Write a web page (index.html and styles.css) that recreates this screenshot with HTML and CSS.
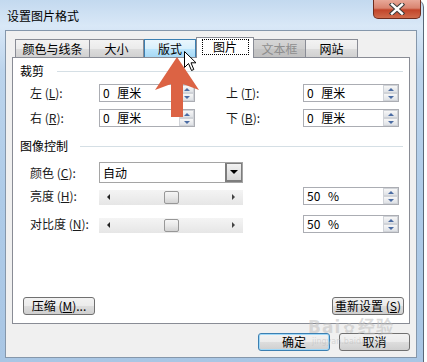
FILE: index.html
```html
<!DOCTYPE html>
<html lang="zh-CN">

<head>
    <meta charset="UTF-8">
    <title>设置图片格式</title>
    <link rel="stylesheet" href="styles.css">
</head>

<body>
    <div class="window">
        <div class="titlebar">
            <span class="title">设置图片格式</span>
            <div class="close-btn">
                <svg width="18" height="12" viewBox="0 0 18 12">
                    <path d="M4 1.5 L14 10.5 M14 1.5 L4 10.5" stroke="#3b3b3b" stroke-width="4.4" stroke-linecap="square" />
                    <path d="M4 1.5 L14 10.5 M14 1.5 L4 10.5" stroke="#fff" stroke-width="2.4" stroke-linecap="square" />
                </svg>
            </div>
        </div>

        <div class="client">
            <div class="tabs">
                <div class="tab" style="width:75px">颜色与线条</div>
                <div class="tab" style="width:54px">大小</div>
                <div class="tab hover" style="width:52px">版式</div>
                <div class="tab active" style="width:58px"><span class="focus">图片</span></div>
                <div class="tab disabled" style="width:52px">文本框</div>
                <div class="tab" style="width:52px">网站</div>
            </div>

            <div class="panel">
                <div class="group-head"><span>裁剪</span><i class="rule"></i></div>

                <div class="crop-grid">
                    <label>左 (<u>L</u>):</label>
                    <div class="spin-box"><span>0 厘米</span><div class="spin"><b class="up"></b><b class="down"></b></div></div>
                    <label>上 (<u>T</u>):</label>
                    <div class="spin-box"><span>0 厘米</span><div class="spin"><b class="up"></b><b class="down"></b></div></div>
                    <label>右 (<u>R</u>):</label>
                    <div class="spin-box"><span>0 厘米</span><div class="spin"><b class="up"></b><b class="down"></b></div></div>
                    <label>下 (<u>B</u>):</label>
                    <div class="spin-box"><span>0 厘米</span><div class="spin"><b class="up"></b><b class="down"></b></div></div>
                </div>

                <div class="group-head image-head"><span>图像控制</span><i class="rule"></i></div>

                <div class="ctl-row row-color">
                    <label>颜色 (<u>C</u>):</label>
                    <div class="combo"><span>自动</span><b class="drop"><i></i></b></div>
                </div>
                <div class="ctl-row row-bright">
                    <label>亮度 (<u>H</u>):</label>
                    <div class="slider"><i class="arr-l"></i><span class="thumb"></span><i class="arr-r"></i></div>
                    <div class="spin-box"><span>50 %</span><div class="spin"><b class="up"></b><b class="down"></b></div></div>
                </div>
                <div class="ctl-row row-contrast">
                    <label>对比度 (<u>N</u>):</label>
                    <div class="slider"><i class="arr-l"></i><span class="thumb"></span><i class="arr-r"></i></div>
                    <div class="spin-box"><span>50 %</span><div class="spin"><b class="up"></b><b class="down"></b></div></div>
                </div>

                <div class="panel-buttons">
                    <button class="btn">压缩 (<u>M</u>)...</button>
                    <button class="btn">重新设置 (<u>S</u>)</button>
                </div>
            </div>

            <div class="footer">
                <button class="btn default">确定</button>
                <button class="btn">取消</button>
            </div>
        </div>

        <!-- watermark over the dialog -->
        <div class="watermark">
            <span class="wm-big">Bai<span class="paw">&#10047;</span>经验</span>
            <span class="wm-small">jingyan.baidu.com</span>
        </div>

        <!-- red arrow pointing at the tab -->
        <svg class="pointer-arrow" width="50" height="62" viewBox="0 0 50 62">
            <polygon points="26,0 48,33 32,27 32,60 20,60 20,27 4,33" fill="#dc6344" />
        </svg>

        <!-- mouse cursor -->
        <svg class="cursor" width="13" height="21" viewBox="0 0 13 21">
            <path d="M0.5 0.5 L0.5 16.5 L4.5 12.5 L7.5 19.5 L9.8 18.5 L7 11.8 L12 11.8 Z" fill="#fff" stroke="#000" stroke-width="1" />
        </svg>
    </div>
</body>

</html>
```

FILE: styles.css
```css
body {
  margin: 0;
  width: 427px;
  height: 362px;
  overflow: hidden;
  background: #ffffff;
  font-family: "Noto Sans CJK SC", "DejaVu Sans", sans-serif;
  font-size: 12px;
  line-height: 14px;
  color: #000;
}

.window {
  position: relative;
  width: 424px;
  height: 362px;
  box-sizing: border-box;
  padding: 0 6px 4px 5px;
  border-right: 1px solid #5a6878;
  border-top-right-radius: 7px;
  background: linear-gradient(to bottom, #c3d9ef 0, #d9e8f7 26px, #bcd4ec 70px, #aecbe8 200px, #a9c6e4 100%);
  display: flex;
  flex-direction: column;
}

.titlebar {
  height: 30px;
  display: flex;
  justify-content: space-between;
  align-items: flex-start;
}

.title {
  padding: 9px 0 0 2px;
  color: #000;
}

.close-btn {
  width: 48px;
  height: 19px;
  margin-right: -4px;
  box-sizing: border-box;
  border: 1px solid #6e2c1e;
  border-top: none;
  border-radius: 0 0 5px 5px;
  background: linear-gradient(to bottom, #e8a898 0, #d98470 45%, #c2452a 55%, #cf6b4c 100%);
  display: flex;
  align-items: center;
  justify-content: center;
}

/* dialog client area */
.client {
  height: 328px;
  box-sizing: border-box;
  border: 1px solid #8597ab;
  background: #f0f0f0;
  padding: 6px 6px 6px 6px;
  display: flex;
  flex-direction: column;
}

.tabs {
  height: 20px;
  display: flex;
  align-items: flex-end;
  padding-left: 3px;
}

.tab {
  height: 18px;
  box-sizing: border-box;
  border: 1px solid #898c95;
  border-bottom: none;
  margin-right: 0;
  background: linear-gradient(to bottom, #f3f3f3 0, #ebebeb 50%, #dddddd 51%, #d1d1d1 100%);
  text-align: center;
  line-height: 17px;
}

.tab + .tab {
  border-left: none;
}

.tab.hover {
  border-color: #3c7fb1;
  border-left: 1px solid #3c7fb1;
  background: linear-gradient(to bottom, #eaf6fd 0, #d9f0fc 50%, #bee6fd 51%, #a7d9f5 100%);
}

.tab.active {
  position: relative;
  z-index: 1;
  height: 21px;
  margin-bottom: -1px;
  border-left: 1px solid #898c95;
  background: #ffffff;
  padding-top: 2px;
  line-height: 14px;
}

.tab.disabled {
  border-left: none;
  color: #8e8e8e;
  background: linear-gradient(to bottom, #d6d6d6 0, #cdcdcd 50%, #c4c4c4 51%, #c0c0c0 100%);
}

.focus {
  display: inline-block;
  width: 45px;
  height: 14px;
  outline: 1px dotted #000;
}

/* tab page */
.panel {
  height: 267px;
  box-sizing: border-box;
  border: 1px solid #898c95;
  background: #ffffff;
  padding: 6px 6px 8px 7px;
  display: flex;
  flex-direction: column;
}

.group-head {
  display: flex;
  align-items: center;
  height: 14px;
}

.group-head .rule {
  flex: 1;
  height: 1px;
  margin-left: 13px;
  background: #d5dfe5;
}

.image-head {
  margin-top: 12px;
}

.image-head .rule {
  margin-left: 12px;
}

.crop-grid {
  margin-top: 6px;
  padding-left: 10px;
  display: grid;
  grid-template-columns: 69px 127px 77px 96px;
  grid-auto-rows: 18px;
  row-gap: 7px;
  align-items: center;
}

label {
  white-space: nowrap;
  color: #1a1a1a;
}

.spin-box {
  width: 96px;
  height: 18px;
  box-sizing: border-box;
  border: 1px solid #abadb3;
  background: #fff;
  display: flex;
  justify-content: space-between;
  align-items: center;
  padding-left: 3px;
  word-spacing: 5px;
}

.spin {
  width: 15px;
  height: 16px;
  display: flex;
  flex-direction: column;
  gap: 0;
}

.spin b {
  flex: 1;
  position: relative;
  box-sizing: border-box;
  border: 1px solid #d0d3d8;
  background: linear-gradient(to bottom, #f7f7f7, #dfe2e6);
}

.spin b::after {
  content: "";
  position: absolute;
  left: 4px;
  top: 2px;
  border-left: 3px solid transparent;
  border-right: 3px solid transparent;
}

.spin .up::after {
  border-bottom: 3px solid #4b6ca3;
}

.spin .down::after {
  border-top: 3px solid #4b6ca3;
}

.ctl-row {
  display: flex;
  align-items: center;
  padding-left: 10px;
}

.ctl-row label {
  width: 69px;
}

.row-color {
  margin-top: 9px;
  height: 21px;
}

.row-bright {
  margin-top: 4px;
  height: 18px;
}

.row-contrast {
  margin-top: 10px;
  height: 18px;
}

.combo {
  width: 144px;
  height: 21px;
  box-sizing: border-box;
  border: 1px solid #a5a5a5;
  background: #fff;
  display: flex;
  justify-content: space-between;
  align-items: center;
  padding-left: 3px;
}

.drop {
  width: 17px;
  height: 19px;
  box-sizing: border-box;
  border: 2px solid #7d7d7d;
  border-right-width: 1px;
  border-top-width: 1px;
  background: linear-gradient(to bottom, #f2f2f2, #d6d6d6);
  display: flex;
  align-items: center;
  justify-content: center;
}

.drop i {
  border-left: 4px solid transparent;
  border-right: 4px solid transparent;
  border-top: 4px solid #000;
}

.slider {
  position: relative;
  width: 144px;
  height: 15px;
  margin-top: 2px;
  margin-right: 60px;
  background: linear-gradient(to bottom, #f4f4f4, #e6e6e6);
  display: flex;
  justify-content: space-between;
  align-items: center;
  padding: 0 8px;
  box-sizing: border-box;
}

.arr-l {
  border-top: 3px solid transparent;
  border-bottom: 3px solid transparent;
  border-right: 3px solid #222;
}

.arr-r {
  border-top: 3px solid transparent;
  border-bottom: 3px solid transparent;
  border-left: 3px solid #444;
}

.thumb {
  position: absolute;
  left: 65px;
  top: 1px;
  width: 15px;
  height: 13px;
  box-sizing: border-box;
  border: 1px solid #979797;
  border-radius: 2px;
  background: linear-gradient(to bottom, #f6f6f6 0, #e8e8e8 50%, #d3d3d3 100%);
}

.panel-buttons {
  margin-top: auto;
  padding-left: 3px;
  margin-right: -1px;
  display: flex;
  justify-content: space-between;
}

.btn {
  width: 72px;
  height: 18px;
  box-sizing: border-box;
  border: 1px solid #707070;
  border-radius: 3px;
  padding: 0;
  font-family: inherit;
  font-size: 12px;
  line-height: 14px;
  color: #000;
  background: linear-gradient(to bottom, #f2f2f2 0, #ebebeb 50%, #dddddd 51%, #cfcfcf 100%);
}

.footer {
  margin-top: 9px;
  display: flex;
  justify-content: flex-end;
  gap: 9px;
}

.footer .btn:last-child {
  width: 71px;
}

.btn.default {
  border-color: #3c7fb1;
  box-shadow: inset 0 0 0 1px #9fd8f8;
}

/* overlays */
.watermark {
  position: absolute;
  left: 308px;
  top: 318px;
  display: flex;
  flex-direction: column;
  color: rgba(190, 190, 190, 0.55);
  pointer-events: none;
}

.wm-big {
  font-family: "DejaVu Sans", sans-serif;
  font-size: 17px;
  line-height: 18px;
  font-weight: bold;
  letter-spacing: 1px;
}

.paw {
  font-size: 14px;
  margin: 0 2px;
}

.wm-small {
  font-family: "DejaVu Sans", sans-serif;
  font-size: 8px;
  line-height: 10px;
  margin-left: 4px;
}

.pointer-arrow {
  position: absolute;
  left: 151px;
  top: 57px;
}

.cursor {
  position: absolute;
  left: 184px;
  top: 51px;
}
```
